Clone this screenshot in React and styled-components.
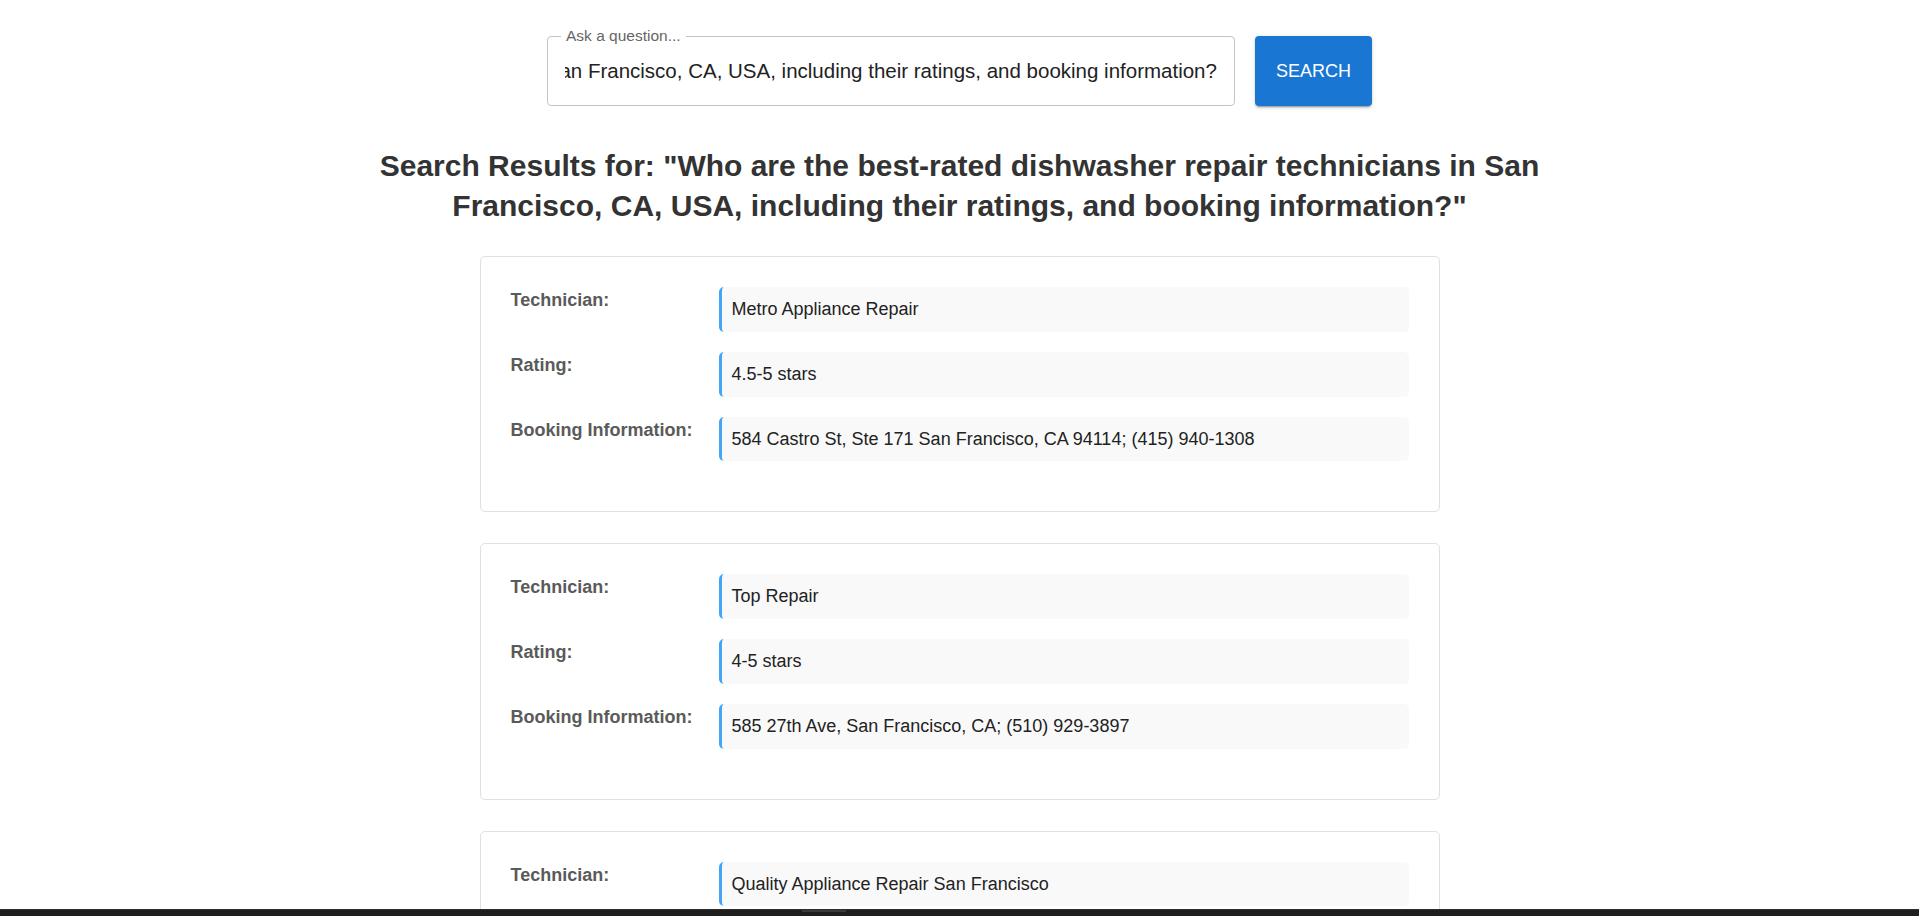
import { useEffect, useRef } from "react";
import styled, { createGlobalStyle } from "styled-components";

const question =
  "Who are the best-rated dishwasher repair technicians in San Francisco, CA, USA, including their ratings, and booking information?";

const results = [
  {
    technician: "Metro Appliance Repair",
    rating: "4.5-5 stars",
    booking: "584 Castro St, Ste 171 San Francisco, CA 94114; (415) 940-1308",
  },
  {
    technician: "Top Repair",
    rating: "4-5 stars",
    booking: "585 27th Ave, San Francisco, CA; (510) 929-3897",
  },
  {
    technician: "Quality Appliance Repair San Francisco",
    rating: "4.5 stars",
    booking: "San Francisco, CA; (415) 326-4181",
  },
];

const GlobalStyle = createGlobalStyle`
  html, body {
    margin: 0;
    padding: 0;
    background: #ffffff;
    font-family: "Liberation Sans", Arial, sans-serif;
    scrollbar-width: none;
  }

  body::-webkit-scrollbar {
    display: none;
  }
`;

const Page = styled.main`
  padding: 36px 20px 40px;
  box-sizing: border-box;
`;

const SearchRow = styled.form`
  display: flex;
  justify-content: center;
  align-items: stretch;
  gap: 20px;
`;

const SearchField = styled.div`
  position: relative;
  width: 688px;
  height: 70px;
  box-sizing: border-box;
  border: 1px solid #c4c4c4;
  border-radius: 4px;
  display: flex;
  align-items: center;
`;

const FieldLabel = styled.label`
  position: absolute;
  top: -10px;
  left: 13px;
  padding: 0 5px;
  background: #ffffff;
  font-size: 15.5px;
  line-height: 18px;
  color: #666666;
`;

const Input = styled.input`
  flex: 1;
  min-width: 0;
  height: 100%;
  box-sizing: border-box;
  padding: 0 17px;
  border: none;
  outline: none;
  background: transparent;
  font-family: "Liberation Sans", Arial, sans-serif;
  font-size: 20.5px;
  color: #222222;
`;

const SearchButton = styled.button`
  height: 70px;
  padding: 0 21px;
  border: none;
  border-radius: 4px;
  background: #1976d2;
  color: #ffffff;
  font-family: "Liberation Sans", Arial, sans-serif;
  font-size: 18px;
  text-transform: uppercase;
  cursor: pointer;
  box-shadow: 0 3px 1px -2px rgba(0, 0, 0, 0.2), 0 2px 2px 0 rgba(0, 0, 0, 0.14),
    0 1px 5px 0 rgba(0, 0, 0, 0.12);
`;

const Heading = styled.h2`
  max-width: 1200px;
  margin: 40px auto 30px;
  font-size: 30px;
  line-height: 40px;
  font-weight: 700;
  color: #333333;
  text-align: center;
`;

const ResultList = styled.div`
  max-width: 960px;
  margin: 0 auto;
`;

const Card = styled.section`
  box-sizing: border-box;
  padding: 30px;
  margin-bottom: 31px;
  border: 1px solid #e0e0e0;
  border-radius: 5px;
  background: #ffffff;
`;

const Row = styled.div`
  display: grid;
  grid-template-columns: 200px 1fr;
  column-gap: 8px;
  margin-bottom: 20px;
`;

const Label = styled.div`
  font-size: 18px;
  line-height: 1.45;
  font-weight: 700;
  color: #5a5a5a;
`;

const Value = styled.div`
  padding: 10px 10px;
  border-left: 3px solid #42a5f5;
  border-radius: 5px;
  background: #f9f9f9;
  font-size: 18px;
  line-height: 24.75px;
  color: #222222;
`;

const BottomBar = styled.div`
  position: fixed;
  left: 0;
  right: 0;
  bottom: 0;
  height: 6px;
  background: #1e1e1e;
  border-top: 1px solid #2e2e2e;
  display: flex;
`;

const BarThumb = styled.span`
  margin-left: 802px;
  width: 44px;
  height: 2px;
  background: #3a3a3a;
`;

const ResultCard = ({ item }) => (
  <Card>
    <Row>
      <Label>Technician:</Label>
      <Value>{item.technician}</Value>
    </Row>
    <Row>
      <Label>Rating:</Label>
      <Value>{item.rating}</Value>
    </Row>
    <Row>
      <Label>Booking Information:</Label>
      <Value>{item.booking}</Value>
    </Row>
  </Card>
);

const App = () => {
  const inputRef = useRef(null);

  useEffect(() => {
    // keep the end of the question visible, like after typing
    const el = inputRef.current;
    if (el) el.scrollLeft = el.scrollWidth;
  }, []);

  return (
    <>
      <GlobalStyle />
      <Page>
        <SearchRow onSubmit={(e) => e.preventDefault()}>
          <SearchField>
            <FieldLabel htmlFor="question">Ask a question...</FieldLabel>
            <Input id="question" ref={inputRef} defaultValue={question} />
          </SearchField>
          <SearchButton type="submit">Search</SearchButton>
        </SearchRow>
        <Heading>Search Results for: "{question}"</Heading>
        <ResultList>
          {results.map((item) => (
            <ResultCard key={item.technician} item={item} />
          ))}
        </ResultList>
      </Page>
      <BottomBar>
        <BarThumb />
      </BottomBar>
    </>
  );
};

export default App;
